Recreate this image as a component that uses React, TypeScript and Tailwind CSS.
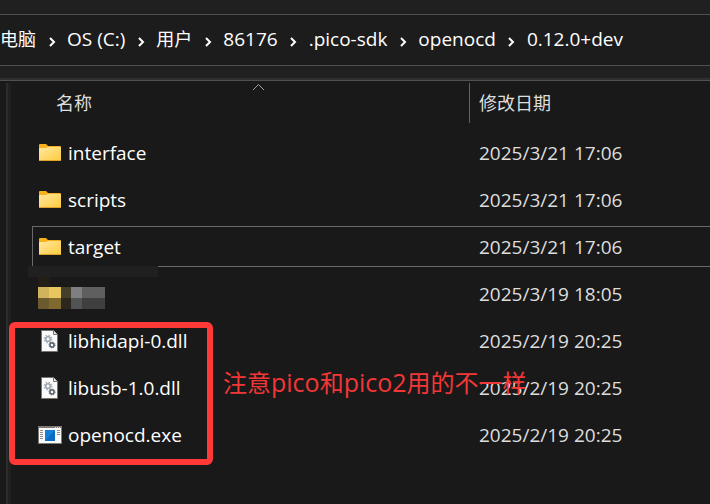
import { Fragment, useState } from "react";

type FileKind = "folder" | "hidden" | "dll" | "exe";

interface FileEntry {
  name: string;
  kind: FileKind;
  modified: string;
}

const crumbs = ["电脑", "OS (C:)", "用户", "86176", ".pico-sdk", "openocd", "0.12.0+dev"];

const files: FileEntry[] = [
  { name: "interface", kind: "folder", modified: "2025/3/21 17:06" },
  { name: "scripts", kind: "folder", modified: "2025/3/21 17:06" },
  { name: "target", kind: "folder", modified: "2025/3/21 17:06" },
  { name: "", kind: "hidden", modified: "2025/3/19 18:05" },
  { name: "libhidapi-0.dll", kind: "dll", modified: "2025/2/19 20:25" },
  { name: "libusb-1.0.dll", kind: "dll", modified: "2025/2/19 20:25" },
  { name: "openocd.exe", kind: "exe", modified: "2025/2/19 20:25" },
];

function FolderIcon() {
  return (
    <svg width="24" height="24" viewBox="0 0 24 24" aria-hidden="true">
      <defs>
        <linearGradient id="folder" x1="0" y1="0" x2="1" y2="1">
          <stop offset="0" stopColor="#ffe8a0" />
          <stop offset="1" stopColor="#ffcb3d" />
        </linearGradient>
      </defs>
      <path d="M1 4q0-1 1-1h6l2 2h12q1 0 1 1v4H1z" fill="#f8b11b" />
      <path d="M1 8q0-1 1-1h6l2-1h12q1 0 1 1v12q0 1-1 1H2q-1 0-1-1z" fill="url(#folder)" />
      <path d="M1 19h22q0 1-1 1H2q-1 0-1-1z" fill="#e0a129" />
    </svg>
  );
}

function DllIcon() {
  return (
    <svg width="24" height="24" viewBox="0 0 24 24" aria-hidden="true">
      <path d="M3.5 1.5h12l4 4v17h-16z" fill="#fafafa" stroke="#77736f" />
      <path d="M15.5 1.5v4h4" fill="#e6e6e6" stroke="#77736f" />
      <circle cx="10" cy="10" r="3.6" fill="none" stroke="#a9b1ba" strokeWidth="1.6" strokeDasharray="1.5 1.33" />
      <circle cx="10" cy="10" r="2.3" fill="none" stroke="#9da7b1" strokeWidth="1.6" />
      <circle cx="14" cy="16" r="2.9" fill="none" stroke="#68727c" strokeWidth="1.2" strokeDasharray="1.3 0.98" />
      <circle cx="14" cy="16" r="2" fill="none" stroke="#59636d" strokeWidth="1.4" />
    </svg>
  );
}

function ExeIcon() {
  return (
    <svg width="24" height="24" viewBox="0 0 24 24" aria-hidden="true">
      <path d="M.5 3.5h23v17H.5z" fill="#fafafa" stroke="#7c7976" />
      <path d="M0 3h24v2H0z" fill="#7c7976" />
      <path d="M17 4.5h1m1 0h1m1 0h1" stroke="#d8d8d8" />
      <path
        d="M2 7.5h3M2 9.5h3M2 11.5h3M2 13.5h3M2 15.5h3M19 7.5h3M19 9.5h3M19 11.5h3"
        stroke="#8f8f8f"
      />
      <path d="M7 7h10v11H7z" fill="#1480d8" />
      <path d="M17 7v11H7z" fill="#0a6cc4" />
    </svg>
  );
}

// Pixelated cover over a private file name
function Mosaic() {
  return (
    <svg width="67" height="30" viewBox="0 2 67 30" shapeRendering="crispEdges" role="img" aria-label="hidden">
      <path d="M0 10h11v11H0z" fill="#d2b35d" />
      <path d="M11 10h12v11H11z" fill="#e9c55f" />
      <path d="M23 10h10v11H23z" fill="#453e2b" />
      <path d="M33 10h11v11H33z" fill="#7e7f82" />
      <path d="M44 10h23v11H44z" fill="#5f5f5f" />
      <path d="M0 21h11v11H0z" fill="#6b5a2f" />
      <path d="M11 21h12v11H11z" fill="#80692f" />
      <path d="M23 21h10v11H23z" fill="#2c271c" />
      <path d="M33 21h11v11H33z" fill="#525355" />
      <path d="M44 21h23v11H44z" fill="#3f3f3f" />
    </svg>
  );
}

function FileIcon({ kind }: { kind: FileKind }) {
  switch (kind) {
    case "folder":
      return <FolderIcon />;
    case "dll":
      return <DllIcon />;
    case "exe":
      return <ExeIcon />;
    default:
      return <Mosaic />;
  }
}

function AddressBar() {
  return (
    <nav aria-label="path" className="mt-[14px] border-y border-[#505050] bg-[#1c1c1c]">
      <ol className="flex h-[50px] items-center whitespace-nowrap text-[19px] text-white">
        {crumbs.map((crumb, i) => (
          <Fragment key={crumb}>
            {i > 0 && (
              <li aria-hidden="true" className="flex w-[31px] shrink-0 justify-center pt-1">
                <svg width="8" height="10" viewBox="0 0 8 10">
                  <path d="M2 1l4 4-4 4" fill="none" stroke="#fff" strokeWidth="2" />
                </svg>
              </li>
            )}
            <li className="pb-[2px]">
              <button type="button" className={/^[一-龥]/.test(crumb) ? "text-[18px]" : ""}>
                {crumb}
              </button>
            </li>
          </Fragment>
        ))}
      </ol>
    </nav>
  );
}

export default function App() {
  const [focused, setFocused] = useState("target");

  return (
    <div className="flex min-h-screen flex-col overflow-hidden bg-[#202020] font-['Open_Sans','Noto_Sans_CJK_SC',sans-serif]">
      <AddressBar />
      <div className="mt-3 h-[3px] border-b border-[#505050] bg-[#2f2f2f]" />

      <main className="flex flex-1 bg-[#191919]">
        <div className="mt-[2px] ml-[6px] w-[5px] shrink-0 border-l-2 border-[#2c2c2c] bg-[#202020]" />

        <div className="relative flex-1 pt-[2px]">
          <table className="w-full table-fixed border-collapse text-left text-[19px]">
            <colgroup>
              <col className="w-[458px]" />
              <col />
            </colgroup>
            <thead>
              <tr className="h-[46px] align-top text-[18px] text-[#dedede]">
                <th scope="col" className="relative p-0 font-normal">
                  <button type="button" className="h-10 w-full pl-[45px] text-left">
                    名称
                  </button>
                  <svg className="absolute top-0 left-[241px]" width="13" height="8" viewBox="0 0 13 8" aria-hidden="true">
                    <path d="M1 7l5.5-5.5L12 7" fill="none" stroke="#a0a0a0" />
                  </svg>
                </th>
                <th scope="col" className="p-0 font-normal">
                  <button type="button" className="h-10 w-full border-l border-[#636363] pl-[9px] text-left">
                    修改日期
                  </button>
                </th>
              </tr>
            </thead>
            <tbody>
              {files.map((file) => {
                const line = file.name !== "" && file.name === focused ? "border-[#6a6a6a]" : "border-transparent";
                return (
                  <tr key={file.name} className="h-[47px]" onClick={() => setFocused(file.name)}>
                    <td className="p-0 pl-[21px]">
                      <div className={`flex h-[41px] items-center gap-[6px] border-y border-l pl-[5px] text-white ${line}`}>
                        <FileIcon kind={file.kind} />
                        <span className="pt-[2px]">{file.name}</span>
                      </div>
                    </td>
                    <td className="p-0">
                      <div className={`flex h-[41px] items-center border-y pl-[10px] whitespace-nowrap text-[#dedede] ${line}`}>
                        <span className="pt-[2px]">{file.modified}</span>
                      </div>
                    </td>
                  </tr>
                );
              })}
            </tbody>
          </table>

          {/* rest of the blurred area around the hidden row */}
          <div className="absolute top-[185px] left-[17px] h-[11px] w-[130px] bg-[#202020]" />
          <div className="absolute top-[196px] left-[27px] h-[10px] w-[11px] bg-[#231f18]" />

          {/* annotation */}
          <div className="absolute top-[241px] -left-[2px] h-[143px] w-[204px] rounded-md border-6 border-[#ff3838]" />
          <p className="absolute top-[283px] left-[212px] text-[24px] leading-9 whitespace-nowrap text-[#f23737]">
            注意<span className="text-[25px]">pico</span>和<span className="text-[25px]">pico2</span>用的不一样
          </p>
        </div>
      </main>
    </div>
  );
}
